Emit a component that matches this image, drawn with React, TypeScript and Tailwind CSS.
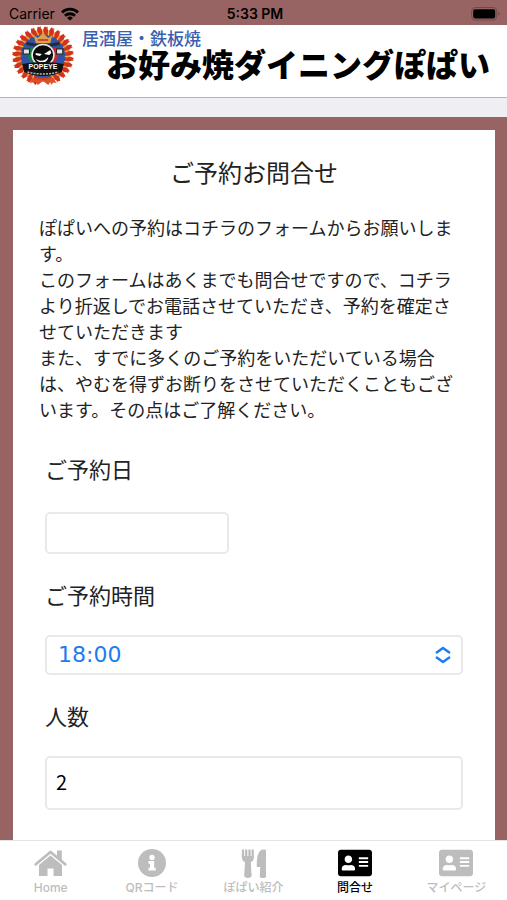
import { FaAddressCard } from "react-icons/fa";
import type { ReactNode } from "react";

function WifiIcon() {
  return (
    <svg viewBox="0 0 18 14" className="h-[14px] w-[18px]" aria-hidden="true">
      <g fill="none" stroke="black" strokeWidth="2.8">
        <path d="M1 5.4a11.3 11.3 0 0 1 16 0" />
        <path d="M4 8.8a7.1 7.1 0 0 1 10 0" />
      </g>
      <path d="M9 13.6 6.1 11a4.1 4.1 0 0 1 5.8 0Z" />
    </svg>
  );
}

function BatteryIcon() {
  return (
    <svg viewBox="0 0 30 14" className="h-[14px] w-[30px]" aria-hidden="true">
      <rect x="0.7" y="0.5" width="25" height="12.5" rx="3.5" fill="none" stroke="#6f4a4a" />
      <rect x="2.2" y="2.2" width="22" height="9.2" rx="1.8" />
      <path d="M27.3 4.8c1.8.7 1.8 3.3 0 4Z" fill="#6f4a4a" />
    </svg>
  );
}

function HomeIcon() {
  return (
    <svg viewBox="0 0 33 26" className="h-[26px] w-[33px]" fill="currentColor" aria-hidden="true">
      <path d="M23 0.500h4.800v10L23 6.500Z" />
      <path d="M1.800 14.300 16.500 2 31.200 14.300" fill="none" stroke="currentColor" strokeWidth="2.800" strokeLinecap="round" strokeLinejoin="round" />
      <path d="M16.500 5.400 28 15v11h-8.500v-7.500h-6V26H5V15Z" />
    </svg>
  );
}

function InfoIcon() {
  return (
    <svg viewBox="0 0 28 28" className="size-7" aria-hidden="true">
      <circle cx="14" cy="14" r="14" fill="currentColor" />
      <circle cx="14" cy="8.4" r="2.7" fill="white" />
      <path d="M10.5 12h5.7v6.7h1.5v2.8h-7.2v-2.8H12v-3.9h-1.5Z" fill="white" />
    </svg>
  );
}

function UtensilsIcon() {
  return (
    <svg viewBox="0 0 26 29" className="h-[29px] w-[26px]" aria-hidden="true">
      <path d="M2 1.5V8M5.200 1.500V9M8.500 1.500V9M11.700 1.500V8" fill="none" stroke="currentColor" strokeWidth="2.300" strokeLinecap="round" />
      <path d="M.9 7h12c0 4-1.200 5.500-3.100 6l.8 14c.1 2.500-7.500 2.500-7.400 0L4 13C2 12.500.9 11 .9 7ZM25 1.500v26c0 2-6.300 2-6.300 0l.5-9.500h-3.400C15.500 9 17 .5 22.500.5c1.500 0 2.500.2 2.500 1Z" fill="currentColor" />
    </svg>
  );
}

const leafAngles = Array.from({ length: 25 }, (_, i) => -156 + i * 13);

function Crest() {
  return (
    <svg viewBox="0 0 62 60" className="h-[60px] w-[62px] shrink-0" role="img" aria-label="POPEYE">
      <g transform="translate(31 30) scale(1.04 1) translate(-31 -30)">
        <circle cx="31" cy="30" r="23.5" fill="#2e55a3" stroke="#cf3d20" strokeWidth="4" />
        {leafAngles.map((a) => (
          <g key={a} transform={`rotate(${a} 31 30)`}>
            <path d="M31 8.500c-5-1-6.500-4-5-8 3.500 1.500 5.500 4.500 5 8Z" fill="#cf3220" />
            <path d="M30 8.500c0-4 1.500-7 5.500-8 .5 3.500-1.500 6.500-5.500 8Z" fill="#e2632a" />
            <path d="m30.500 4 1 5" stroke="#f3b647" strokeWidth="1" />
          </g>
        ))}
        <path d="m21 52 10 2 10-2 3 5-6-1-2 3-5-4-5 4-2-3-6 1Z" fill="#dd4e29" />
        <path d="m15 23 9-2v21c-5-4-8-10-9-19Z" fill="#187d4c" />
        <path d="m47 23-9-2v21c5-4 8-10 9-19Z" fill="#c4283a" />
        <path d="M12 23h6v5h-6zM44 23h6v5h-6z" fill="#e6e2dc" stroke="#222" />
        <path d="m22 9 4 3 5-5 5 5 4-3-2 8H24Z" fill="#dfa04a" />
        <path d="M26 14h10" stroke="#b8323b" strokeWidth="1.500" />
        <path d="m15 16 11 2h10l11-2v3l-11 2H26l-11-2Z" fill="#252a35" />
        <circle cx="31" cy="29" r="10.500" fill="#0b0b0b" stroke="#ececec" strokeWidth="1.500" />
        <path d="m24 27 6 1-2 2-4-1ZM38 24l-6 4 5 1 2-2ZM24 33c5 3 9 2 12-2 0 6-8 8-12 2Z" fill="white" />
        <path d="M11 38q20-4 40 0l-2 8q-18 8-36 0Z" fill="#111" />
        <path d="M16 46q15 4 30 0" stroke="#b5b5b5" strokeWidth="1.500" strokeDasharray="2 1" fill="none" />
      </g>
      <text x="31" y="43" textAnchor="middle" fill="white" fontFamily="Liberation Sans" fontWeight="700" fontSize="7">
        POPEYE
      </text>
    </svg>
  );
}

function Tab({ label, icon, active = false }: { label: string; icon: ReactNode; active?: boolean }) {
  return (
    <a
      href="#"
      aria-current={active ? "page" : undefined}
      className={`flex flex-1 flex-col items-center pt-[5px] text-[12px] leading-4 font-medium whitespace-nowrap ${
        active ? "text-black" : "text-[#bdbdbd]"
      }`}
    >
      <span className="flex h-[34px] items-center">{icon}</span>
      {label}
    </a>
  );
}

export default function App() {
  return (
    <div className="flex h-screen flex-col overflow-hidden bg-[#986463] font-['Liberation_Sans','Noto_Sans_CJK_JP',sans-serif] text-[#222]">
      <div className="grid h-[25px] shrink-0 grid-cols-3 items-center pr-[6px] pl-[9px] pt-[2px] font-['Inter',sans-serif] text-[14px] leading-5 text-black">
        <div className="flex items-center gap-[6px]">
          Carrier <WifiIcon />
        </div>
        <div className="text-center font-semibold">5:33 PM</div>
        <div className="flex justify-end">
          <BatteryIcon />
        </div>
      </div>

      <header className="flex h-[73px] shrink-0 gap-2 border-b border-[#b5b5b5] bg-white px-3 pt-[1px]">
        <Crest />
        <div className="flex-1 pt-[3px] whitespace-nowrap">
          <p className="text-[17px] leading-[22px] font-medium text-[#3a5eb0]">居酒屋・鉄板焼</p>
          <h1 className="pl-6 text-[32px] leading-[30px] font-black text-black">お好み焼ダイニングぽぱい</h1>
        </div>
      </header>
      <div className="h-[19px] shrink-0 bg-[#efeff3]" />

      <main className="mt-[13px] mr-3 ml-[13px] flex-1 overflow-hidden bg-white px-[26px] pt-6 font-['Noto_Sans_CJK_JP',sans-serif]">
        <h2 className="text-center text-[24px] leading-9">ご予約お問合せ</h2>
        <p className="mt-6 pr-2 text-[18px] leading-[26px]">
          ぽぱいへの予約はコチラのフォームからお願いします。
          <br />
          このフォームはあくまでも問合せですので、コチラより折返しでお電話させていただき、予約を確定させていただきます
          <br />
          また、すでに多くのご予約をいただいている場合は、やむを得ずお断りをさせていただくこともございます。その点はご了解ください。
        </p>
        <form className="mt-[30px] px-[6px] text-[22px] leading-8">
          <label htmlFor="date" className="block">
            ご予約日
          </label>
          <input
            id="date"
            type="text"
            className="mt-7 block h-[42px] w-[184px] rounded-[5px] border-2 border-[#e9e9e9] px-[10px] text-[18px]"
          />
          <label htmlFor="time" className="mt-6 block">
            ご予約時間
          </label>
          <div className="relative mt-[25px]">
            <select
              id="time"
              defaultValue="18:00"
              className="block h-10 w-full appearance-none rounded-[5px] border-2 border-[#e9e9e9] bg-white px-[11px] font-['DejaVu_Sans',sans-serif] text-[22px] leading-8 text-[#1a7df0]"
            >
              <option>18:00</option>
              <option>18:30</option>
              <option>19:00</option>
            </select>
            <svg
              viewBox="0 0 16 18"
              className="pointer-events-none absolute top-[11px] right-3 h-[18px] w-4"
              fill="none"
              stroke="#1a7df0"
              strokeWidth="2.4"
              aria-hidden="true"
            >
              <path d="m1 7 7-5 7 5M1 11l7 5 7-5" />
            </svg>
          </div>
          <label htmlFor="people" className="mt-6 block">
            人数
          </label>
          <input
            id="people"
            type="text"
            defaultValue="2"
            className="mt-[25px] block h-[54px] w-full rounded-[5px] border-2 border-[#e9e9e9] px-[9px] pb-1 text-[20px] text-black"
          />
        </form>
      </main>

      <nav className="flex h-[60px] shrink-0 border-t border-[#e3e3e3] bg-white font-['Inter','Noto_Sans_CJK_JP',sans-serif]">
        <Tab label="Home" icon={<HomeIcon />} />
        <Tab label="QRコード" icon={<InfoIcon />} />
        <Tab label="ぽぱい紹介" icon={<UtensilsIcon />} />
        <Tab label="問合せ" active icon={<FaAddressCard className="size-[34px]" />} />
        <Tab label="マイページ" icon={<FaAddressCard className="size-[34px]" />} />
      </nav>
    </div>
  );
}
